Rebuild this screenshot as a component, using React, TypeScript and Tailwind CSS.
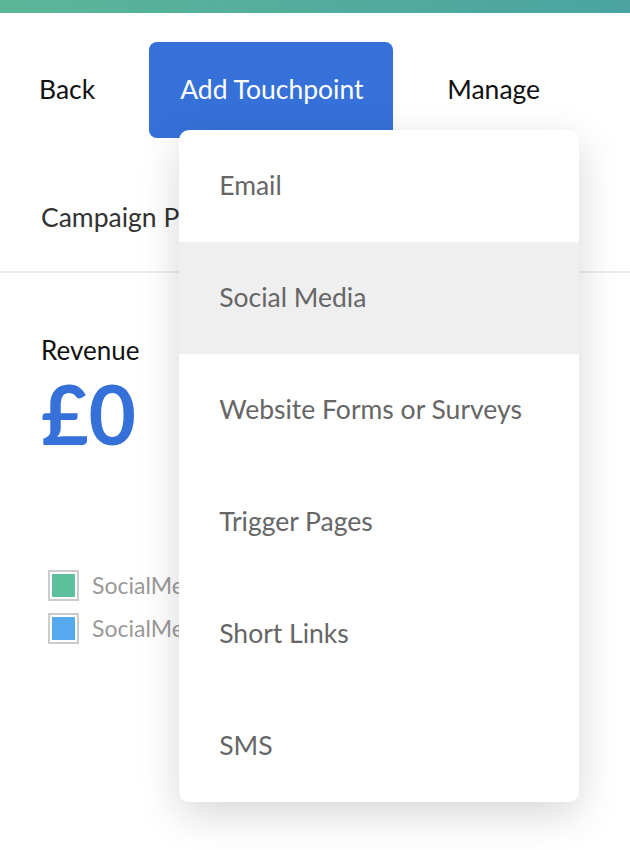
import React from "react"

const touchpoints = ["Email", "Social Media", "Website Forms or Surveys", "Trigger Pages", "Short Links", "SMS"]

const legend = [
	{ label: "SocialMedia Facebook", color: "bg-[#5ebf9c]" },
	{ label: "SocialMedia Twitter", color: "bg-[#55a9ec]" },
]

export default function App() {
	const [hovered] = React.useState(1)

	return (
		<div className="relative min-h-[850px] w-full overflow-hidden bg-white font-['Lato','Open_Sans',sans-serif]">
			<div className="h-[13px] w-full bg-gradient-to-r from-[#5bb698] to-[#4aa3a1]" />

			<div className="flex items-center pt-[29px]">
				<button className="ml-[39px] text-[26.5px] text-[#111]">Back</button>
				<div className="relative ml-[54px]">
					<button className="flex h-[96px] w-[244px] items-center rounded-[8px] bg-[#3571d9] pl-[31px] text-[26.5px] text-white">
						Add Touchpoint
					</button>
					<div className="absolute left-[30px] top-[88px] z-10 w-[400px] overflow-hidden rounded-[10px] bg-white shadow-[0_12px_40px_rgba(0,0,0,0.16)]">
						{touchpoints.map((item, i) => (
							<div
								key={item}
								className={`flex h-[112px] items-center pl-[40px] text-[26.5px] text-[#666] ${
									i === hovered ? "bg-[#efefef]" : ""
								}`}>
								{item}
							</div>
						))}
					</div>
				</div>
				<button className="ml-[54px] text-[26.5px] text-[#111]">Manage</button>
			</div>

			<div className="flex h-[135px] items-center border-b-2 border-[#ececec] pl-[41px] pt-[26px]">
				<p className="text-[26.5px] text-[#333]">Campaign Performance</p>
			</div>

			<div className="px-[41px] pt-[64px]">
				<p className="text-[26px] leading-none text-[#111]">Revenue</p>
				<p className="mt-[9px] text-[82px] font-bold leading-none text-[#3571d9]">£0</p>
			</div>

			<div className="mt-[116px] flex flex-col gap-[12px] pl-[48px]">
				{legend.map((l) => (
					<div key={l.label} className="flex items-center gap-[13px]">
						<div className="h-[31px] w-[31px] border-2 border-[#cccccc] bg-white p-[2px]">
							<div className={`h-full w-full ${l.color}`} />
						</div>
						<span className="text-[23px] leading-none text-[#999]">{l.label}</span>
					</div>
				))}
			</div>
		</div>
	)
}
